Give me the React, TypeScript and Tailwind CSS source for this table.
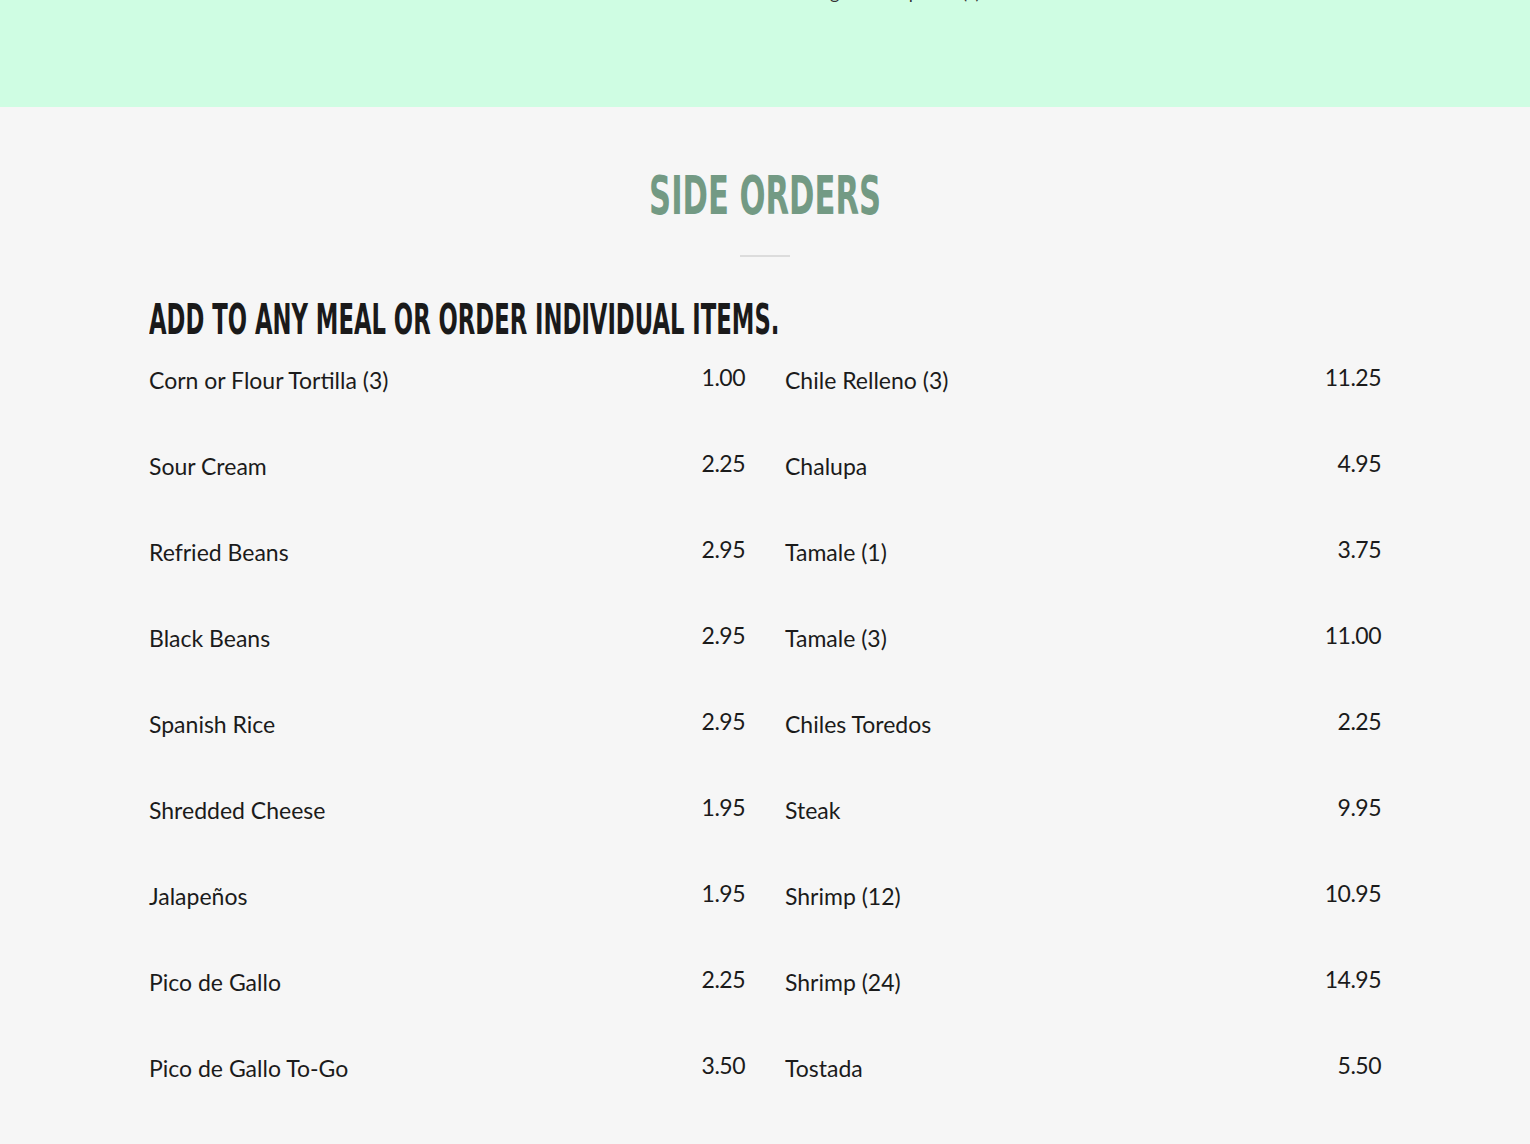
const left = [
  { name: "Corn or Flour Tortilla (3)", price: "1.00" },
  { name: "Sour Cream", price: "2.25" },
  { name: "Refried Beans", price: "2.95" },
  { name: "Black Beans", price: "2.95" },
  { name: "Spanish Rice", price: "2.95" },
  { name: "Shredded Cheese", price: "1.95" },
  { name: "Jalapeños", price: "1.95" },
  { name: "Pico de Gallo", price: "2.25" },
  { name: "Pico de Gallo To-Go", price: "3.50" },
];

const right = [
  { name: "Chile Relleno (3)", price: "11.25" },
  { name: "Chalupa", price: "4.95" },
  { name: "Tamale (1)", price: "3.75" },
  { name: "Tamale (3)", price: "11.00" },
  { name: "Chiles Toredos", price: "2.25" },
  { name: "Steak", price: "9.95" },
  { name: "Shrimp (12)", price: "10.95" },
  { name: "Shrimp (24)", price: "14.95" },
  { name: "Tostada", price: "5.50" },
];

const heading = { fontFamily: '"DejaVu Sans Condensed", "Liberation Sans", sans-serif' };

function Column({ items }: { items: { name: string; price: string }[] }) {
  return (
    <div className="flex flex-col">
      {items.map((item) => (
        <div key={item.name} className="flex justify-between h-[86px]">
          <span className="text-[23px] leading-[30px] pt-[4px]">{item.name}</span>
          <span className="text-[23px] leading-[30px] pt-[1px] tracking-[-0.5px]">{item.price}</span>
        </div>
      ))}
    </div>
  );
}

export default function App() {
  return (
    <div className="min-h-screen bg-[#f6f6f6] text-[#1b1b1b]" style={{ fontFamily: "Lato, sans-serif" }}>
      {/* mint band from previous section */}
      <div className="h-[107px] bg-[#cffde3] overflow-hidden">
        <p className="text-center text-[18px] leading-[18px] -mt-[17px] text-[#333] pl-[260px]">
          Vegetarian options (v)
        </p>
      </div>

      <section className="max-w-[1232px] mx-auto pt-[55px] pb-10">
        <h2 className="text-center text-[54px] leading-[68px] font-bold text-[#739a84]" style={heading}>
          <span className="inline-block scale-x-[0.63]">SIDE ORDERS</span>
        </h2>
        <div className="w-[50px] h-[2px] bg-[#dcdcdc] mx-auto mt-[25px]" />
        <h3 className="text-[43px] leading-[54px] font-bold mt-[35px] text-[#1a1a1a] whitespace-nowrap" style={heading}>
          <span className="inline-block origin-left scale-x-[0.587]">ADD TO ANY MEAL OR ORDER INDIVIDUAL ITEMS.</span>
        </h3>
        <div className="grid grid-cols-2 gap-x-10 mt-[15px]">
          <Column items={left} />
          <Column items={right} />
        </div>
      </section>
    </div>
  );
}
